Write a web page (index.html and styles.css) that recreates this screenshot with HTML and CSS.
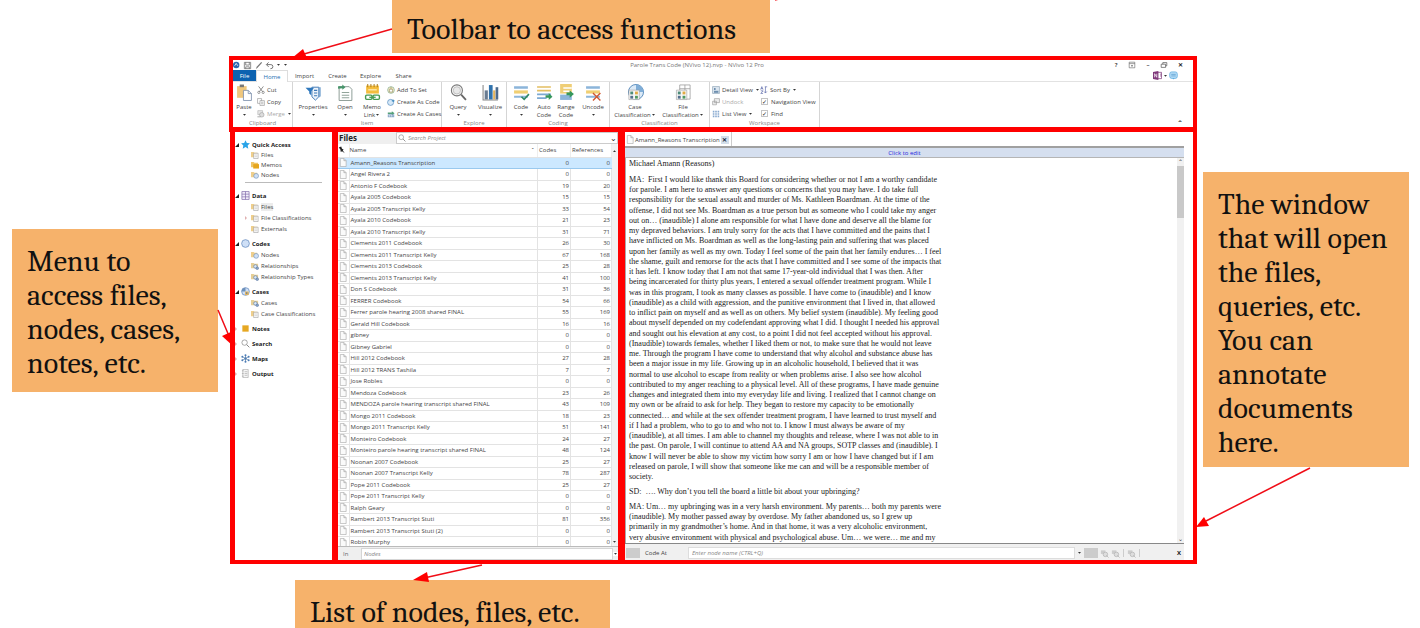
FILE: index.html
```
<!DOCTYPE html>
<html lang="en">
<head>
<meta charset="utf-8">
<title>NVivo 12 workspace overview</title>
<link rel="stylesheet" href="styles.css">
</head>
<body>
<svg class="defs" aria-hidden="true">
  <symbol id="page" viewBox="0 0 8 10"><path d="M1 .5h4l2.500 2.500v6.500H1z" fill="#fafafa" stroke="#a8a8a8" stroke-width=".7"/><path d="M5 .5V3h2.500" fill="#ddd" stroke="#a8a8a8" stroke-width=".7"/></symbol>
  <symbol id="folder-page" viewBox="0 0 9 9"><path d="M0 1h3l1 1h3v5H0z" fill="#efcf8c"/><path d="M3 2.500h5v6H3z" fill="#fff" stroke="#8f8f8f" stroke-width=".6"/><path d="M4 4.500h3M4 6.500h3" stroke="#aaa" stroke-width=".6"/></symbol>
  <symbol id="folder-memo" viewBox="0 0 9 9"><path d="M0 1h3l1 1h4v5H0z" fill="#efc465"/><path d="M2.500 3.500H9V8.500H2.500z" fill="#e5a51c"/></symbol>
  <symbol id="folder-node" viewBox="0 0 9 9"><path d="M0 1h3l1 1h3v5H0z" fill="#efcf8c"/><circle cx="5.800" cy="5.500" r="2.700" fill="#cfe0f5" stroke="#6d91bd" stroke-width=".7"/></symbol>
  <symbol id="folder-rel" viewBox="0 0 9 9"><path d="M0 1h3l1 1h4v5H0z" fill="#e6cf96"/><circle cx="5" cy="5" r="2" fill="#dbe8f7" stroke="#5b7ba8" stroke-width=".7"/><circle cx="7" cy="7" r="1.500" fill="#8ba6cc" stroke="#56749f" stroke-width=".6"/></symbol>
  <symbol id="star" viewBox="0 0 10 10"><path d="M5 .2l1.500 3.100 3.400.4-2.500 2.400.7 3.500L5 7.900 1.900 9.600l.7-3.500L.1 3.700l3.400-.4z" fill="#2aa4e8"/></symbol>
  <symbol id="data" viewBox="0 0 10 10"><path d="M1 .6h8v8.800H1zM5 .6v8.800M1 3.500h8M1 6.500h8" fill="#f3effa" stroke="#8570ad" stroke-width=".8"/></symbol>
  <symbol id="codes" viewBox="0 0 10 10"><circle cx="5" cy="5" r="4.300" fill="#cfe0f7" stroke="#6288bd" stroke-width=".8"/></symbol>
  <symbol id="cases" viewBox="0 0 10 10"><circle cx="5" cy="5" r="4.300" fill="#cfe0f7" stroke="#6288bd" stroke-width=".8"/><path d="M5 .7v4.300H.7A4.300 4.300 0 0 1 5 .7z" fill="#6d90ba"/><path d="M4.500 5h4v4h-4z" fill="#e4b55c"/><path d="M5.500 6h1.500v1.500H5.500z" fill="#547aa9"/></symbol>
  <symbol id="note" viewBox="0 0 10 10"><path d="M1.500 1.500h7v7h-7z" fill="#e6a822"/></symbol>
  <symbol id="search" viewBox="0 0 10 10"><circle cx="4" cy="4" r="3" fill="#fff" stroke="#888" stroke-width=".8"/><path d="M6.300 6.300l3 3" stroke="#888" stroke-width="1.100"/></symbol>
  <symbol id="maps" viewBox="0 0 10 10"><path d="M5 1v8M1.500 3l7 4M1.500 7l7-4" stroke="#4d7098" stroke-width=".7"/><g fill="#4b7cb5"><circle cx="5" cy="1.300" r="1.100"/><circle cx="5" cy="8.700" r="1.100"/><circle cx="1.500" cy="3" r="1.100"/><circle cx="8.500" cy="3" r="1.100"/><circle cx="1.500" cy="7" r="1.100"/><circle cx="8.500" cy="7" r="1.100"/><circle cx="5" cy="5" r="1.300"/></g></symbol>
  <symbol id="output" viewBox="0 0 10 10"><path d="M2 .5h6v9H2zM1 2h2M1 5h2M1 8h2M4 3h3M4 5h3M4 7h3" fill="#f6f6f6" stroke="#999" stroke-width=".6"/></symbol>

  <symbol id="app" viewBox="0 0 10 10"><circle cx="4" cy="5" r="4" fill="#2e68ad"/><path d="M2 6l2-3 2 3" fill="none" stroke="#fff"/></symbol>
  <symbol id="save" viewBox="0 0 10 10"><path d="M1.500 1.500h7v7h-7zM3 1.500v3h4v-3M3 8.500V6.500h4v2" fill="none" stroke="#666" stroke-width=".8"/></symbol>
  <symbol id="pen" viewBox="0 0 10 10"><path d="M2 9L3 6.500 8 1l1 1-5 5.500z" fill="#777"/></symbol>
  <symbol id="undo" viewBox="0 0 10 10"><path d="M2 4h4.500a2 2 0 0 1 0 4.500H6M4 1.500L1.500 4 4 6.500" fill="none" stroke="#555" stroke-width=".9"/></symbol>
  <symbol id="caret" viewBox="0 0 5 4"><path d="M1 1h3L2.500 2.800z" fill="#333"/></symbol>
  <symbol id="ribbon-opts" viewBox="0 0 10 10"><path d="M1.500 1.500h7v7h-7zM1.500 3.300h7M5 7.500V5M4 6l1-1 1 1" fill="none" stroke="#555" stroke-width=".7"/></symbol>
  <symbol id="restore" viewBox="0 0 10 10"><path d="M1.500 4h5.500v4H1.500zM3.500 4V2h5v4H7" fill="none" stroke="#444" stroke-width=".8"/></symbol>
  <symbol id="onenote" viewBox="0 0 10 10"><path d="M5 1.500h4.500v7H5M7.800 3.500h1.700M7.800 5.500h1.700" fill="#fff" stroke="#7f397b" stroke-width=".8"/><path d="M0 1l6-1v10L0 9z" fill="#80397b"/><path d="M1.800 7V3l2.400 4V3" fill="none" stroke="#fff" stroke-width=".8"/></symbol>
  <symbol id="chat" viewBox="0 0 10 10"><rect x=".8" y="1" width="8.400" height="7.200" rx="2.200" fill="#b7ddf7" stroke="#55a7dd" stroke-width=".8"/><path d="M4 8l1 1.500L6 8z" fill="#55a7dd"/><path d="M2.500 3.700h5M2.500 5.500h5" stroke="#428fc7" stroke-width=".7"/></symbol>

  <symbol id="paste" viewBox="0 0 16 16"><path d="M1 2h9v11H1z" fill="#efc77d"/><path d="M3.500.5h4v2.500h-4z" fill="#777"/><path d="M7 6h4.500l3 3v6.500H7z" fill="#fff" stroke="#7e91ad" stroke-width=".8"/><path d="M11.500 6v3h3" fill="none" stroke="#7e91ad" stroke-width=".8"/></symbol>
  <symbol id="cut" viewBox="0 0 10 10"><path d="M2 .5l5 6.500M8 .5L3 7" stroke="#666" stroke-width=".9"/><circle cx="2.300" cy="8" r="1.400" fill="none" stroke="#666" stroke-width=".8"/><circle cx="7.700" cy="8" r="1.400" fill="none" stroke="#666" stroke-width=".8"/></symbol>
  <symbol id="copy" viewBox="0 0 10 10"><path d="M.7.7h5v6h-5z" fill="#fff" stroke="#888" stroke-width=".7"/><path d="M3.700 3.300h5.500v6H3.700zM5 5.300h3M5 7.200h3" fill="#fff" stroke="#888" stroke-width=".7"/></symbol>
  <symbol id="merge" viewBox="0 0 10 10"><path d="M1 .8h6v5H1z" fill="#e8e8e8" stroke="#aaa" stroke-width=".7"/><circle cx="6" cy="6" r="2.800" fill="#ddd" stroke="#999" stroke-width=".7"/><path d="M.5 8.500h4" stroke="#999"/></symbol>
  <symbol id="props" viewBox="0 0 16 16"><path d="M6.500 3h6.500v9l-3.200 3.200L6.500 12z" fill="#eef4fb" stroke="#3d78b5" stroke-width=".9"/><path d="M13 3h1.800v8.500L13 13z" fill="#7fa9d3"/><path d="M8.500 6h3M8.500 8.500h3M8.500 11h3" stroke="#3d78b5"/><path d="M.5 3.500h8L5.800 7v3.500L4 9V7z" fill="#2f78bd"/></symbol>
  <symbol id="open" viewBox="0 0 16 16"><path d="M2 2.500h9.500l2.500 2.500v10.500H2z" fill="#fff" stroke="#7c8e86" stroke-width=".8"/><path d="M4.500 8h7M4.500 10.500h7M4.500 13h7" stroke="#91a49a"/><path d="M1 4.500V2h4V.5L8 3 5 5.500V4z" fill="#46946a"/></symbol>
  <symbol id="memo" viewBox="0 0 16 16"><path d="M2 1.500h12v7.500H2z" fill="#f4bd3d"/><path d="M3.500 0v3M6.500 0v3M9.500 0v3M12.500 0v3" stroke="#a87816" stroke-width=".9"/><path d="M4 5.500h8" stroke="#fff3cc"/><rect x="1.500" y="10.500" width="6" height="4" rx="1" fill="none" stroke="#469a50" stroke-width="1.300"/><rect x="8.500" y="10.500" width="6" height="4" rx="1" fill="none" stroke="#469a50" stroke-width="1.300"/><path d="M5 12.500h6" stroke="#469a50" stroke-width="1.200"/></symbol>
  <symbol id="add-set" viewBox="0 0 10 10"><circle cx="5" cy="5" r="4.200" fill="#f8efc8" stroke="#79a38a" stroke-width=".8"/><path d="M3 4h4v3.500H3zM5 1v3" fill="#fff" stroke="#8a8150" stroke-width=".7"/></symbol>
  <symbol id="as-code" viewBox="0 0 10 10"><circle cx="4.500" cy="5.500" r="3.800" fill="#d5e8f8" stroke="#4b84ba" stroke-width=".8"/><path d="M6 3.500h3.500M7.800 2v3" stroke="#2f83bb"/></symbol>
  <symbol id="as-case" viewBox="0 0 10 10"><path d="M1 3h5V1.500L9.500 4 6 6.500V5H1z" fill="#54a078"/><path d="M1 5.500h8V9H1z" fill="#7398bd"/><path d="M2 6.500h1.500V8H2zM4.500 6.500H6V8H4.500zM7 6.500h1V8H7z" fill="#fff"/></symbol>
  <symbol id="query" viewBox="0 0 16 16"><circle cx="6.500" cy="6" r="5.200" fill="#f4f4f4" stroke="#777" stroke-width="1"/><circle cx="6.500" cy="6" r="3.400" fill="#e8e8e8" stroke="#bbb" stroke-width=".8"/><path d="M10.500 10l4.500 5" stroke="#666" stroke-width="1.700"/></symbol>
  <symbol id="visual" viewBox="0 0 16 16"><path d="M1 1v14h14" fill="none" stroke="#888"/><path d="M2.500 6h3v8.500h-3z" fill="#687b91"/><path d="M6.500 1h3.500v13.500H6.500z" fill="#3173ad"/><path d="M10.500 6h2v8.500h-2z" fill="#e2b35b"/><path d="M12.800 3h2.500v11.500h-2.500z" fill="#4c6b8d"/></symbol>
  <symbol id="lines" viewBox="0 0 16 16"><path d="M1 2h13v2.500H1zM1 11h13v2H1z" fill="#8cb5da"/><path d="M1 6h13v3H1z" fill="#f0cf73"/></symbol>
  <symbol id="code" viewBox="0 0 16 16"><use href="#lines"/><path d="M8 12l2.500 2.500L15 9.500" fill="none" stroke="#318a65" stroke-width="1.500"/></symbol>
  <symbol id="auto" viewBox="0 0 16 16"><path d="M1 2h13v1.500H1zM1 5.500h13V7H1z" fill="#e4bf62"/><path d="M1 9h13v1.500H1zM1 12.500h9V14H1z" fill="#7ca9d2"/><path d="M9 10.500h3V8.500l3.500 3.500-3.500 3v-2H9z" fill="#36975c"/></symbol>
  <symbol id="range" viewBox="0 0 16 16"><path d="M2 0h11v9H2z" fill="#efce76"/><path d="M5 3h8v1.500H5zM5 6h6v1.500H5z" fill="#fff"/><path d="M2 10h11v5H2z" fill="#8bb4da"/><path d="M8 8h3V6l4 3.500L11 13v-2.500H8z" fill="#36975c"/></symbol>
  <symbol id="uncode" viewBox="0 0 16 16"><use href="#lines"/><path d="M7.500 8.500l7 7M14.500 8.500l-7 7" stroke="#d05732" stroke-width="1.300"/></symbol>
  <symbol id="case-class" viewBox="0 0 18 18"><circle cx="9.500" cy="8.500" r="8" fill="#dceaf7" stroke="#5589bb"/><path d="M9.500.5v8h8a8 8 0 0 0-8-8z" fill="#7fadd7"/><path d="M2 6.500h11v10H2z" fill="#f7f7f7" stroke="#999" stroke-width=".6"/><path d="M3.500 8h3v3h-3z" fill="#4c8b79"/><path d="M8.500 8h3v3h-3z" fill="#e1ab43"/><path d="M3.500 12.500h3v3h-3z" fill="#536f8d"/><path d="M8.500 12.500h3v3h-3z" fill="#4f9861"/></symbol>
  <symbol id="file-class" viewBox="0 0 18 18"><path d="M5 1h11v15H5zM5 5h11M10.500 1v15" fill="#fff" stroke="#999" stroke-width=".8"/><path d="M1.500 6.500h11v10h-11z" fill="#f7f7f7" stroke="#999" stroke-width=".6"/><path d="M3 8h3v3H3z" fill="#4c8b79"/><path d="M8 8h3v3H8z" fill="#e1ab43"/><path d="M3 12.500h3v3H3z" fill="#536f8d"/><path d="M8 12.500h3v3H8z" fill="#4f9861"/></symbol>
  <symbol id="detail" viewBox="0 0 10 10"><path d="M.7.7h8.600v8.600H.7z" fill="#dce6f0" stroke="#8ba0b5" stroke-width=".8"/><path d="M2.500 6h5.500v2.500H2.500z" fill="#6d8eae"/><path d="M2.500 2.500h2V5h-2z" fill="#6d8eae"/></symbol>
  <symbol id="undock" viewBox="0 0 10 10"><path d="M3 .8h6.300v5H3zM.8 4h4.700v4.500H.8z" fill="#eee" stroke="#999" stroke-width=".8"/></symbol>
  <symbol id="list" viewBox="0 0 10 10"><path d="M1 1h2v2H1zM1 4h2v2H1zM1 7h2v2H1zM4 1h2v2H4zM4 4h2v2H4zM4 7h2v2H4zM7 1h2v2H7zM7 4h2v2H7zM7 7h2v2H7z" fill="#88a9d0"/></symbol>
  <symbol id="sort" viewBox="0 0 10 10"><path d="M.8 4.500L2.300.8l1.500 3.700M1.300 3.300h2M1 6h2.800L1 9.300h2.800M6.800 1v7.500M5 6.800l1.800 2 1.800-2M6 1h3" fill="none" stroke="#5361a5" stroke-width=".8"/></symbol>
  <symbol id="clip" viewBox="0 0 10 10"><path d="M1 2l3-1.500 1 3 2 1-1 1 2.500 3.500-3.500-2.500-1.500 1-.5-3z" fill="#222"/></symbol>
  <symbol id="ghost" viewBox="0 0 10 10"><path d="M1 1.500h5v4H1z" fill="#ccc"/><circle cx="6" cy="6" r="2.500" fill="#ddd" stroke="#bbb"/><path d="M7 7l2.500 2.500" stroke="#bbb"/></symbol>
</svg>

<main class="stage">
  <aside class="side"><p class="note note-menu">Menu to access files, nodes, cases, notes, etc.</p></aside>

  <div class="center">
    <p class="note note-toolbar">Toolbar to access functions</p>

    <section class="app" aria-label="NVivo 12 Pro">
      <header class="ribbon">
        <div class="titlebar">
          <div class="quick">
            <svg class="i8"><use href="#app"/></svg>
            <button aria-label="Save"><svg class="i9"><use href="#save"/></svg></button>
            <button aria-label="Edit"><svg class="i9"><use href="#pen"/></svg></button>
            <button aria-label="Undo"><svg class="i9"><use href="#undo"/></svg></button>
            <button aria-label="Undo list"><svg class="car"><use href="#caret"/></svg></button>
            <button aria-label="Customize"><svg class="car"><use href="#caret"/></svg></button>
          </div>
          <h1 class="title">Parole Trans Code (NVivo 12).nvp - NVivo 12 Pro</h1>
          <div class="winbtns">
            <button aria-label="Help">?</button>
            <button aria-label="Ribbon options"><svg class="i8"><use href="#ribbon-opts"/></svg></button>
            <button aria-label="Minimize">–</button>
            <button aria-label="Restore"><svg class="i8"><use href="#restore"/></svg></button>
            <button aria-label="Close">✕</button>
          </div>
        </div>
        <nav class="tabs">
          <button class="tab file">File</button><button class="tab active">Home</button><button class="tab">Import</button><button class="tab">Create</button><button class="tab">Explore</button><button class="tab">Share</button>
          <span class="tabs-right"><svg class="i9"><use href="#onenote"/></svg><svg class="car"><use href="#caret"/></svg><svg class="i9"><use href="#chat"/></svg></span>
        </nav>
        <div class="groups">
          <section class="group g-clip">
            <div class="items">
              <button class="big w22"><svg class="i16"><use href="#paste"/></svg><span>Paste</span><svg class="car"><use href="#caret"/></svg></button>
              <div class="stack">
                <button class="small"><svg class="i8"><use href="#cut"/></svg>Cut</button>
                <button class="small"><svg class="i8"><use href="#copy"/></svg>Copy</button>
                <button class="small" disabled><svg class="i8"><use href="#merge"/></svg>Merge<svg class="car"><use href="#caret"/></svg></button>
              </div>
            </div>
            <h2>Clipboard</h2>
          </section>
          <section class="group g-item">
            <div class="items">
              <button class="big w36"><svg class="i16"><use href="#props"/></svg><span>Properties</span><svg class="car"><use href="#caret"/></svg></button>
              <button class="big w28"><svg class="i16"><use href="#open"/></svg><span>Open</span><svg class="car"><use href="#caret"/></svg></button>
              <button class="big w26"><svg class="i16"><use href="#memo"/></svg><span>Memo</span><span>Link<svg class="car"><use href="#caret"/></svg></span></button>
              <div class="stack">
                <button class="small"><svg class="i8"><use href="#add-set"/></svg>Add To Set</button>
                <button class="small"><svg class="i8"><use href="#as-code"/></svg>Create As Code</button>
                <button class="small"><svg class="i8"><use href="#as-case"/></svg>Create As Cases</button>
              </div>
            </div>
            <h2>Item</h2>
          </section>
          <section class="group g-explore">
            <div class="items">
              <button class="big w32"><svg class="i16"><use href="#query"/></svg><span>Query</span><svg class="car"><use href="#caret"/></svg></button>
              <button class="big w32"><svg class="i16"><use href="#visual"/></svg><span>Visualize</span><svg class="car"><use href="#caret"/></svg></button>
            </div>
            <h2>Explore</h2>
          </section>
          <section class="group g-coding">
            <div class="items">
              <button class="big w24"><svg class="i16"><use href="#code"/></svg><span>Code</span><svg class="car"><use href="#caret"/></svg></button>
              <button class="big w22"><svg class="i16"><use href="#auto"/></svg><span>Auto</span><span>Code</span></button>
              <button class="big w22"><svg class="i16"><use href="#range"/></svg><span>Range</span><span>Code</span></button>
              <button class="big w32"><svg class="i16"><use href="#uncode"/></svg><span>Uncode</span><svg class="car"><use href="#caret"/></svg></button>
            </div>
            <h2>Coding</h2>
          </section>
          <section class="group g-class">
            <div class="items">
              <button class="big w50"><svg class="i16"><use href="#case-class"/></svg><span>Case</span><span>Classification<svg class="car"><use href="#caret"/></svg></span></button>
              <button class="big w46"><svg class="i16"><use href="#file-class"/></svg><span>File</span><span>Classification<svg class="car"><use href="#caret"/></svg></span></button>
            </div>
            <h2>Classification</h2>
          </section>
          <section class="group g-work">
            <div class="items">
              <div class="stack w48">
                <button class="small"><svg class="i8"><use href="#detail"/></svg>Detail View<svg class="car"><use href="#caret"/></svg></button>
                <button class="small" disabled><svg class="i8"><use href="#undock"/></svg>Undock</button>
                <button class="small"><svg class="i8"><use href="#list"/></svg>List View<svg class="car"><use href="#caret"/></svg></button>
              </div>
              <div class="stack">
                <button class="small"><svg class="i8"><use href="#sort"/></svg>Sort By<svg class="car"><use href="#caret"/></svg></button>
                <label class="small check"><input type="checkbox" checked>Navigation View</label>
                <label class="small check"><input type="checkbox" checked>Find</label>
              </div>
            </div>
            <h2>Workspace</h2>
          </section>
          <button class="collapse" aria-label="Collapse ribbon">ˆ</button>
        </div>
      </header>

      <div class="panes">
        <nav class="tree">
          <section class="quick-access">
            <h2><i class="open"></i><svg class="i9"><use href="#star"/></svg>Quick Access</h2>
            <a href="#"><svg class="i8"><use href="#folder-page"/></svg>Files</a>
            <a href="#"><svg class="i8"><use href="#folder-memo"/></svg>Memos</a>
            <a href="#"><svg class="i8"><use href="#folder-node"/></svg>Nodes</a>
          </section>
          <hr>
          <section>
            <h2><i class="open"></i><svg class="i9"><use href="#data"/></svg>Data</h2>
            <a href="#"><svg class="i8"><use href="#folder-page"/></svg><span class="current">Files</span></a>
            <a href="#" class="parent"><i class="shut"></i><svg class="i8"><use href="#folder-page"/></svg>File Classifications</a>
            <a href="#"><svg class="i8"><use href="#folder-page"/></svg>Externals</a>
          </section>
          <section>
            <h2><i class="open"></i><svg class="i9"><use href="#codes"/></svg>Codes</h2>
            <a href="#"><svg class="i8"><use href="#folder-node"/></svg>Nodes</a>
            <a href="#"><svg class="i8"><use href="#folder-rel"/></svg>Relationships</a>
            <a href="#"><svg class="i8"><use href="#folder-rel"/></svg>Relationship Types</a>
          </section>
          <section>
            <h2><i class="open"></i><svg class="i9"><use href="#cases"/></svg>Cases</h2>
            <a href="#"><svg class="i8"><use href="#folder-rel"/></svg>Cases</a>
            <a href="#"><svg class="i8"><use href="#folder-page"/></svg>Case Classifications</a>
          </section>
          <section><h2><i class="shut"></i><svg class="i9"><use href="#note"/></svg>Notes</h2></section>
          <section><h2><i class="shut"></i><svg class="i9"><use href="#search"/></svg>Search</h2></section>
          <section><h2><i class="shut"></i><svg class="i9"><use href="#maps"/></svg>Maps</h2></section>
          <section><h2><i class="shut"></i><svg class="i9"><use href="#output"/></svg>Output</h2></section>
        </nav>

        <section class="files">
          <div class="files-head">
            <h2>Files</h2>
            <label class="searchbox"><svg class="i8"><use href="#search"/></svg><input type="text" placeholder="Search Project" aria-label="Search Project"><span class="chev">⌄</span></label>
          </div>
          <div class="files-body">
            <table>
              <thead><tr><th class="c-ico"><svg class="i8"><use href="#clip"/></svg></th><th class="c-name">Name<span class="asc">ˆ</span></th><th class="c-codes">Codes</th><th class="c-refs">References</th></tr></thead>
              <tbody>
                <tr class="sel"><td><svg class="pg"><use href="#page"/></svg></td><td>Amann_Reasons Transcription</td><td>0</td><td>0</td></tr>
                <tr><td><svg class="pg"><use href="#page"/></svg></td><td>Angel Rivera 2</td><td>0</td><td>0</td></tr>
                <tr><td><svg class="pg"><use href="#page"/></svg></td><td>Antonio F Codebook</td><td>19</td><td>20</td></tr>
                <tr><td><svg class="pg"><use href="#page"/></svg></td><td>Ayala 2005 Codebook</td><td>15</td><td>15</td></tr>
                <tr><td><svg class="pg"><use href="#page"/></svg></td><td>Ayala 2005 Transcript Kelly</td><td>33</td><td>54</td></tr>
                <tr><td><svg class="pg"><use href="#page"/></svg></td><td>Ayala 2010 Codebook</td><td>21</td><td>23</td></tr>
                <tr><td><svg class="pg"><use href="#page"/></svg></td><td>Ayala 2010 Transcript Kelly</td><td>31</td><td>71</td></tr>
                <tr><td><svg class="pg"><use href="#page"/></svg></td><td>Clements 2011 Codebook</td><td>26</td><td>30</td></tr>
                <tr><td><svg class="pg"><use href="#page"/></svg></td><td>Clements 2011 Transcript Kelly</td><td>67</td><td>168</td></tr>
                <tr><td><svg class="pg"><use href="#page"/></svg></td><td>Clements 2013 Codebook</td><td>25</td><td>28</td></tr>
                <tr><td><svg class="pg"><use href="#page"/></svg></td><td>Clements 2013 Transcript Kelly</td><td>41</td><td>100</td></tr>
                <tr><td><svg class="pg"><use href="#page"/></svg></td><td>Don S Codebook</td><td>31</td><td>36</td></tr>
                <tr><td><svg class="pg"><use href="#page"/></svg></td><td>FERRER Codebook</td><td>54</td><td>66</td></tr>
                <tr><td><svg class="pg"><use href="#page"/></svg></td><td>Ferrer parole hearing 2008 shared FINAL</td><td>55</td><td>169</td></tr>
                <tr><td><svg class="pg"><use href="#page"/></svg></td><td>Gerald Hill Codebook</td><td>16</td><td>16</td></tr>
                <tr><td><svg class="pg"><use href="#page"/></svg></td><td>gibney</td><td>0</td><td>0</td></tr>
                <tr><td><svg class="pg"><use href="#page"/></svg></td><td>Gibney Gabriel</td><td>0</td><td>0</td></tr>
                <tr><td><svg class="pg"><use href="#page"/></svg></td><td>Hill 2012 Codebook</td><td>27</td><td>28</td></tr>
                <tr><td><svg class="pg"><use href="#page"/></svg></td><td>Hill 2012 TRANS Tashila</td><td>7</td><td>7</td></tr>
                <tr><td><svg class="pg"><use href="#page"/></svg></td><td>Jose Robles</td><td>0</td><td>0</td></tr>
                <tr><td><svg class="pg"><use href="#page"/></svg></td><td>Mendoza Codebook</td><td>23</td><td>26</td></tr>
                <tr><td><svg class="pg"><use href="#page"/></svg></td><td>MENDOZA parole hearing transcript shared FINAL</td><td>43</td><td>109</td></tr>
                <tr><td><svg class="pg"><use href="#page"/></svg></td><td>Mongo 2011 Codebook</td><td>18</td><td>23</td></tr>
                <tr><td><svg class="pg"><use href="#page"/></svg></td><td>Mongo 2011 Transcript Kelly</td><td>51</td><td>141</td></tr>
                <tr><td><svg class="pg"><use href="#page"/></svg></td><td>Monteiro Codebook</td><td>24</td><td>27</td></tr>
                <tr><td><svg class="pg"><use href="#page"/></svg></td><td>Monteiro parole hearing transcript shared FINAL</td><td>48</td><td>124</td></tr>
                <tr><td><svg class="pg"><use href="#page"/></svg></td><td>Noonan 2007 Codebook</td><td>25</td><td>27</td></tr>
                <tr><td><svg class="pg"><use href="#page"/></svg></td><td>Noonan 2007 Transcript Kelly</td><td>78</td><td>287</td></tr>
                <tr><td><svg class="pg"><use href="#page"/></svg></td><td>Pope 2011 Codebook</td><td>25</td><td>27</td></tr>
                <tr><td><svg class="pg"><use href="#page"/></svg></td><td>Pope 2011 Transcript Kelly</td><td>0</td><td>0</td></tr>
                <tr><td><svg class="pg"><use href="#page"/></svg></td><td>Ralph Geary</td><td>0</td><td>0</td></tr>
                <tr><td><svg class="pg"><use href="#page"/></svg></td><td>Rambert 2013 Transcript Stuti</td><td>81</td><td>356</td></tr>
                <tr><td><svg class="pg"><use href="#page"/></svg></td><td>Rambert 2013 Transcript Stuti (2)</td><td>0</td><td>0</td></tr>
                <tr><td><svg class="pg"><use href="#page"/></svg></td><td>Robin Murphy</td><td>0</td><td>0</td></tr>
              </tbody>
            </table>
            <div class="scroll"><svg class="car up"><use href="#caret"/></svg><svg class="car"><use href="#caret"/></svg></div>
          </div>
          <div class="in-bar"><label for="in">In</label><input id="in" type="text" placeholder="Nodes"><svg class="car"><use href="#caret"/></svg></div>
        </section>

        <section class="doc">
          <div class="doc-tabs"><div class="doc-tab"><svg class="pg"><use href="#page"/></svg><span>Amann_Reasons Transcription</span><button aria-label="Close tab">✕</button></div></div>
          <button class="edit-bar">Click to edit</button>
          <div class="doc-body">
            <article>
              <p><span>Michael Amann (Reasons)</span></p>
              <p><span>MA:&nbsp; First I would like thank this Board for considering whether or not I am a worthy candidate</span>
              <span>for parole. I am here to answer any questions or concerns that you may have. I do take full</span>
              <span>responsibility for the sexual assault and murder of Ms. Kathleen Boardman. At the time of the</span>
              <span>offense, I did not see Ms. Boardman as a true person but as someone who I could take my anger</span>
              <span>out on… (inaudible) I alone am responsible for what I have done and deserve all the blame for</span>
              <span>my depraved behaviors. I am truly sorry for the acts that I have committed and the pains that I</span>
              <span>have inflicted on Ms. Boardman as well as the long-lasting pain and suffering that was placed</span>
              <span>upon her family as well as my own. Today I feel some of the pain that her family endures… I feel</span>
              <span>the shame, guilt and remorse for the acts that I have committed and I see some of the impacts that</span>
              <span>it has left. I know today that I am not that same 17-year-old individual that I was then. After</span>
              <span>being incarcerated for thirty plus years, I entered a sexual offender treatment program. While I</span>
              <span>was in this program, I took as many classes as possible. I have come to (inaudible) and I know</span>
              <span>(inaudible) as a child with aggression, and the punitive environment that I lived in, that allowed</span>
              <span>to inflict pain on myself and as well as on others. My belief system (inaudible). My feeling good</span>
              <span>about myself depended on my codefendant approving what I did. I thought I needed his approval</span>
              <span>and sought out his elevation at any cost, to a point I did not feel accepted without his approval.</span>
              <span>(Inaudible) towards females, whether I liked them or not, to make sure that he would not leave</span>
              <span>me. Through the program I have come to understand that why alcohol and substance abuse has</span>
              <span>been a major issue in my life. Growing up in an alcoholic household, I believed that it was</span>
              <span>normal to use alcohol to escape from reality or when problems arise. I also see how alcohol</span>
              <span>contributed to my anger reaching to a physical level. All of these programs, I have made genuine</span>
              <span>changes and integrated them into my everyday life and living. I realized that I cannot change on</span>
              <span>my own or be afraid to ask for help. They began to restore my capacity to be emotionally</span>
              <span>connected… and while at the sex offender treatment program, I have learned to trust myself and</span>
              <span>if I had a problem, who to go to and who not to. I know I must always be aware of my</span>
              <span>(inaudible), at all times. I am able to channel my thoughts and release, where I was not able to in</span>
              <span>the past. On parole, I will continue to attend AA and NA groups, SOTP classes and (inaudible). I</span>
              <span>know I will never be able to show my victim how sorry I am or how I have changed but if I am</span>
              <span>released on parole, I will show that someone like me can and will be a responsible member of</span>
              <span>society.</span></p>
              <p><span>SD:&nbsp; …. Why don’t you tell the board a little bit about your upbringing?</span></p>
              <p><span>MA: Um… my upbringing was in a very harsh environment. My parents… both my parents were</span>
              <span>(inaudible). My mother passed away by overdose. My father abandoned us, so I grew up</span>
              <span>primarily in my grandmother’s home. And in that home, it was a very alcoholic environment,</span>
              <span>very abusive environment with physical and psychological abuse. Um… we were… me and my</span></p>
            </article>
            <div class="doc-scroll"><span>⌃</span><div class="thumb"></div><span class="down">⌄</span></div>
          </div>
          <div class="code-bar"><i class="block"></i><label for="code-at">Code At</label><input id="code-at" type="text" placeholder="Enter node name (CTRL+Q)"><svg class="car"><use href="#caret"/></svg><i class="block"></i><svg class="i9"><use href="#ghost"/></svg><svg class="i9"><use href="#ghost"/></svg><i class="bar"></i><svg class="i9"><use href="#ghost"/></svg><i class="bar"></i><button aria-label="Close code bar">X</button></div>
        </section>
      </div>
    </section>

    <p class="note note-list">List of nodes, files, etc.</p>
  </div>

  <aside class="side"><p class="note note-window">The window that will open the files, queries, etc. You can annotate documents here.</p></aside>

  <svg class="arrows" aria-hidden="true">
    <g stroke="#f00d17" stroke-width="1.500"><path d="M392 29L304 54M218 310L229 336M1310 468L1206 521M482 565L424 578M775 0l4-1"/></g>
    <g fill="#f00"><path d="M292 58L303 49L307 58z"/><path d="M233 346L222 336L233 331z"/><path d="M1196 527L1204 517L1209 526z"/><path d="M413 580L427 572L429 582z"/></g>
  </svg>
</main>
</body>
</html>
```
FILE: styles.css
```
* { box-sizing: border-box; }
body { margin: 0; background: #fff; font: 6px/8px "Open Sans", "Noto Sans", sans-serif; color: #444; }
h1, h2, p { margin: 0; font: inherit; }
button { border: 0; padding: 0; margin: 0; background: none; font: inherit; color: inherit; white-space: nowrap; }
input { font: inherit; color: inherit; border: 0; padding: 0; margin: 0; min-width: 0; outline: 0; }
svg { display: block; flex: none; }
.defs { display: none; }
.i8 { width: 8px; height: 8px; }
.i9 { width: 9px; height: 9px; }
.i16 { width: 17px; height: 17px; }
.car { width: 5px; height: 4px; }
.pg { width: 8px; height: 9px; }

.stage { position: relative; display: grid; grid-template-columns: 229px minmax(0, 1fr) 223px; height: 100vh; min-height: 400px; overflow: hidden; }
.center { display: flex; flex-direction: column; min-width: 0; min-height: 0; }
.arrows { position: absolute; inset: 0; width: 100%; height: 100%; pointer-events: none; }

.note { background: #f6b26b; color: #111; font: 30px/34px Cambria, Caladea, "Liberation Serif", serif; padding: 16px 15px 11px; }
.note-menu { margin: 229px 11px 0 12px; }
.note-window { margin: 172px 11px 0 6px; padding-bottom: 7px; }
.note-toolbar { align-self: flex-start; margin: 0 0 3px 163px; width: 378px; height: 53px; padding-top: 13px; flex: none; white-space: nowrap; }
.note-list { margin: 16px 0 0 66px; width: 315px; height: 48px; flex: none; white-space: nowrap; }

.app { flex: 1; min-height: 0; display: flex; flex-direction: column; }
.ribbon { border: 4px solid #f00; border-bottom-width: 5px; background: #fff; }
.titlebar { display: grid; grid-template-columns: 1fr auto 1fr; height: 10px; align-items: center; padding-right: 8px; }
.quick { display: flex; align-items: center; gap: 2px; }
.title { color: #777; padding-right: 24px; }
.winbtns { display: flex; justify-content: flex-end; gap: 6px; color: #222; }
.winbtns button { width: 10px; height: 10px; display: grid; place-items: center; font-weight: 600; }
.tabs { display: flex; height: 12px; border-bottom: 1px solid #e2e2e2; align-items: stretch; }
.tab { width: 33px; }
.tab.file { width: 23px; background: #0d62b0; color: #fff; }
.tab.active { width: 32px; height: 12px; background: #fff; color: #2470b3; border: 1px solid #ddd; border-bottom: 0; }
.tabs-right { margin-left: auto; margin-right: 15px; display: flex; align-items: center; gap: 1px; }
.groups { display: flex; height: 45px; }
.group { display: flex; flex-direction: column; border-right: 1px solid #d5d5d5; }
.group h2 { color: #888; text-align: center; line-height: 7px; }
.items { display: flex; height: 38px; padding-top: 2px; }
.g-clip { width: 60px; }
.g-clip .stack { padding-left: 2px; }
.g-item { width: 149px; }
.g-item .items, .g-coding .items, .g-work .items { padding-left: 2px; }
.g-item .stack { padding-left: 2px; }
.g-explore { width: 65px; }
.g-coding { width: 103px; }
.g-class { width: 100px; }
.g-work { width: 110px; }
.big { display: flex; flex-direction: column; align-items: center; flex: none; }
.big > span { display: flex; align-items: center; height: 8px; line-height: 8px; }
.big > .i16 { margin-bottom: 2px; }
.big > .car { margin-top: 2px; }
.w22 { width: 22px; } .w24 { width: 24px; } .w26 { width: 26px; } .w28 { width: 28px; }
.w32 { width: 32px; } .w36 { width: 36px; } .w46 { width: 46px; } .w48 { width: 48px; } .w50 { width: 50px; }
.stack { display: flex; flex-direction: column; gap: 3px; padding-top: 1px; }
.small { display: flex; align-items: center; gap: 2px; height: 9px; white-space: nowrap; }
.small:disabled { color: #aaa; }
.check { gap: 3px; padding-left: 1px; }
.small input { appearance: none; width: 7px; height: 7px; border: 1px solid #c4c4c4; display: grid; place-items: center; }
.small input:checked::after { content: "✓"; color: #222; font: bold 6px/6px "DejaVu Sans", sans-serif; }
.collapse { margin: auto 11px 0 auto; font-size: 8px; line-height: 6px; font-weight: 700; }

.panes { flex: 1; min-height: 0; margin-left: 1px; display: grid; grid-template-columns: 108px 287px minmax(0, 1fr); }
.tree { border: solid #f00; border-width: 0 6px 4px 5px; padding-top: 7px; overflow: hidden; white-space: nowrap; }
.tree section { margin-bottom: 4px; }
.tree h2 { display: flex; align-items: center; height: 11px; gap: 2px; font-weight: 700; color: #222; }
.tree h2 i { width: 4px; flex: none; }
.open::before { content: ""; display: block; border: 2px solid transparent; border-right-color: #222; border-bottom-color: #222; width: 0; height: 0; }
.shut::before { content: ""; display: block; border: 2px solid transparent; border-left-color: #e0b0b0; width: 0; height: 0; }
.tree a { display: flex; align-items: center; gap: 2px; height: 11px; padding-left: 16px; color: inherit; text-decoration: none; }
.tree a.parent { padding-left: 10px; }
.tree a i { width: 4px; }
.quick-access a { height: 10px; }
.current { background: #ececec; }
.tree hr { margin: -2px 10px 7px; border: 0; border-top: 1px solid #bbb; }

.files { border: solid #f00; border-width: 0 7px 4px 0; display: flex; flex-direction: column; min-height: 0; }
.files-head { display: flex; height: 12px; background: #efefef; flex: none; }
.files-head h2 { width: 58px; padding-left: 1px; font: 700 8px/11px "Open Sans", sans-serif; color: #222; }
.searchbox { flex: 1; display: flex; align-items: center; gap: 2px; background: #fff; border: 1px solid #ccc; padding-left: 1px; }
.searchbox input { flex: 1; height: 9px; }
.chev { line-height: 8px; font-size: 8px; color: #222; }
::placeholder { color: #888; opacity: 1; font-style: italic; }
.files-body { flex: 1; min-height: 0; display: flex; overflow: hidden; }
table { flex: 1; border-collapse: collapse; table-layout: fixed; align-self: flex-start; }
th, td { padding: 0; font-weight: 400; text-align: left; white-space: nowrap; border-right: 1px solid #e3e3e3; border-bottom: 1px solid #e3e3e3; line-height: 8px; }
thead tr { height: 13px; }
th { border-right-color: #eee; }
.c-ico { width: 11px; }
.c-codes { width: 33px; }
.c-refs { width: 41px; }
th.c-codes, th.c-refs { padding-left: 1px; }
.asc { float: right; padding-right: 3px; }
tbody tr:nth-child(odd) { height: 11px; }
tbody tr:nth-child(even) { height: 12px; }
td:first-child { padding-left: 1px; }
td:nth-child(2) { padding-left: 1px; }
td:nth-child(n+3) { text-align: right; padding-right: 1px; }
.sel td { background: #cce8ff; border-color: #99c9ef; border-right-color: #cce8ff; }
.scroll { width: 6px; background: #f2f2f2; display: flex; flex-direction: column; justify-content: space-between; padding: 5px 0 2px; }
.up { transform: rotate(180deg); }
.in-bar { display: flex; align-items: center; height: 14px; flex: none; background: #efefef; border-top: 1px solid #bbb; color: #666; }
.in-bar label { width: 23px; padding-left: 5px; }
.in-bar input { flex: 1; height: 12px; border: 1px solid #d5d5d5; background: #fff; padding-left: 2px; }
.in-bar .car { background: #fff; }

.doc { border: solid #f00; border-width: 0 4px 4px 0; padding-right: 9px; display: flex; flex-direction: column; min-height: 0; background: #fff; }
.doc-tabs { height: 14px; flex: none; display: flex; }
.doc-tab { display: flex; align-items: center; gap: 1px; padding: 1px 2px 0 1px; min-width: 103px; border-right: 1px solid #ccc; white-space: nowrap; }
.doc-tab button { margin-left: auto; width: 8px; height: 8px; background: #d3deea; color: #123; font-weight: 700; line-height: 8px; }
.edit-bar { flex: none; height: 12px; background: #d5dfef; border-top: 2px solid #a0a0a0; border-bottom: 1px solid #b5b5b5; color: #2525dc; }
.doc-body { flex: 1; min-height: 0; display: flex; overflow: hidden; border-left: 1px solid #aaa; }
article { flex: 1; min-width: 0; overflow: hidden; padding: 1px 3px 0; font: 8px/10px "Liberation Serif", serif; color: #222; }
article p { margin-bottom: 5px; }
article p:first-child { margin-bottom: 6px; }
article span { display: block; white-space: nowrap; }
article p span:nth-child(4n) { line-height: 11px; }
.doc-scroll { width: 7px; background: #f1f1f1; display: flex; flex-direction: column; align-items: center; color: #333; }
.thumb { width: 7px; height: 52px; background: #c9c9c9; }
.down { margin-top: auto; }
.code-bar { flex: none; height: 17px; display: flex; align-items: center; gap: 2px; background: #f0f0f0; border-top: 1px solid #888; padding: 2px 1px 0; }
.code-bar label { width: 44px; padding-left: 3px; }
.code-bar input { flex: 1; height: 12px; border: 1px solid #ddd; background: #fff; padding-left: 3px; }
.block { width: 14px; height: 10px; background: #ccc; }
.bar { width: 1px; height: 8px; background: #ccc; margin: 0 1px; }
.code-bar button { margin-left: 32px; width: 8px; color: #111; font-weight: 700; }
```
